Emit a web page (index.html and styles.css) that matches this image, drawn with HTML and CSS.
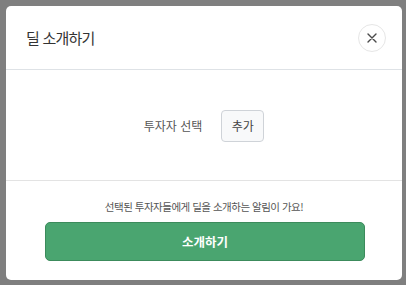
FILE: index.html
```html
<!DOCTYPE html>
<html lang="ko">
<head>
<meta charset="utf-8">
<link rel="stylesheet" href="styles.css">
</head>
<body>
<div class="backdrop">
  <div class="modal">
    <div class="modal-header">
      <h2 class="title">딜 소개하기</h2>
      <button class="close" aria-label="닫기">
        <svg width="10" height="10" viewBox="0 0 10 10"><path d="M1 1L9 9M9 1L1 9" stroke="#4a4a4a" stroke-width="1.4" stroke-linecap="round"/></svg>
      </button>
    </div>
    <div class="modal-body">
      <span class="label">투자자 선택</span>
      <button class="add">추가</button>
    </div>
    <div class="modal-footer">
      <p class="note">선택된 투자자들에게 딜을 소개하는 알림이 가요!</p>
      <button class="primary">소개하기</button>
    </div>
  </div>
</div>
</body>
</html>
```
FILE: styles.css
```css
html, body {
  margin: 0;
  padding: 0;
  height: 100%;
}
body {
  font-family: "Noto Sans CJK KR", "Noto Sans", sans-serif;
  background: #7f7f7f;
}
.backdrop {
  padding: 6px 4px 5px 6px;
  box-sizing: border-box;
  height: 100%;
}
.modal {
  width: 396px;
  height: 274px;
  background: #fff;
  border-radius: 5px;
  display: flex;
  flex-direction: column;
  overflow: hidden;
}
.modal-header {
  height: 64px;
  box-sizing: border-box;
  border-bottom: 1px solid #dee2e6;
  display: flex;
  align-items: center;
  justify-content: space-between;
  padding: 0 16px 0 20px;
}
.title {
  margin: 0;
  font-size: 15px;
  letter-spacing: -0.8px;
  font-weight: 400;
  color: #333;
  line-height: 20px;
}
.close {
  width: 28px;
  height: 28px;
  border-radius: 50%;
  border: 1px solid #e6e6e6;
  background: #fff;
  padding: 0;
  display: flex;
  align-items: center;
  justify-content: center;
}
.modal-body {
  height: 111px;
  box-sizing: border-box;
  border-bottom: 1px solid #e3e3e3;
  display: flex;
  align-items: center;
  justify-content: center;
  gap: 19px;
  padding-top: 1px;
}
.label {
  font-size: 12px;
  color: #555;
}
.add {
  width: 43px;
  height: 32px;
  font-family: inherit;
  font-size: 12px;
  color: #444;
  background: #f8f9fa;
  border: 1px solid #cfd3d8;
  border-radius: 4px;
  padding: 0;
}
.modal-footer {
  flex: 1;
  display: flex;
  flex-direction: column;
  align-items: center;
  padding-top: 17px;
}
.note {
  margin: 0 0 6px;
  font-size: 10.5px;
  letter-spacing: -0.5px;
  line-height: 18px;
  color: #555;
}
.primary {
  width: 320px;
  height: 39px;
  background: #4aa570;
  border: 1px solid #3c8b5c;
  border-radius: 5px;
  color: #fff;
  font-family: inherit;
  font-size: 12.5px;
  font-weight: 700;
  margin-left: 2px;
}
```
